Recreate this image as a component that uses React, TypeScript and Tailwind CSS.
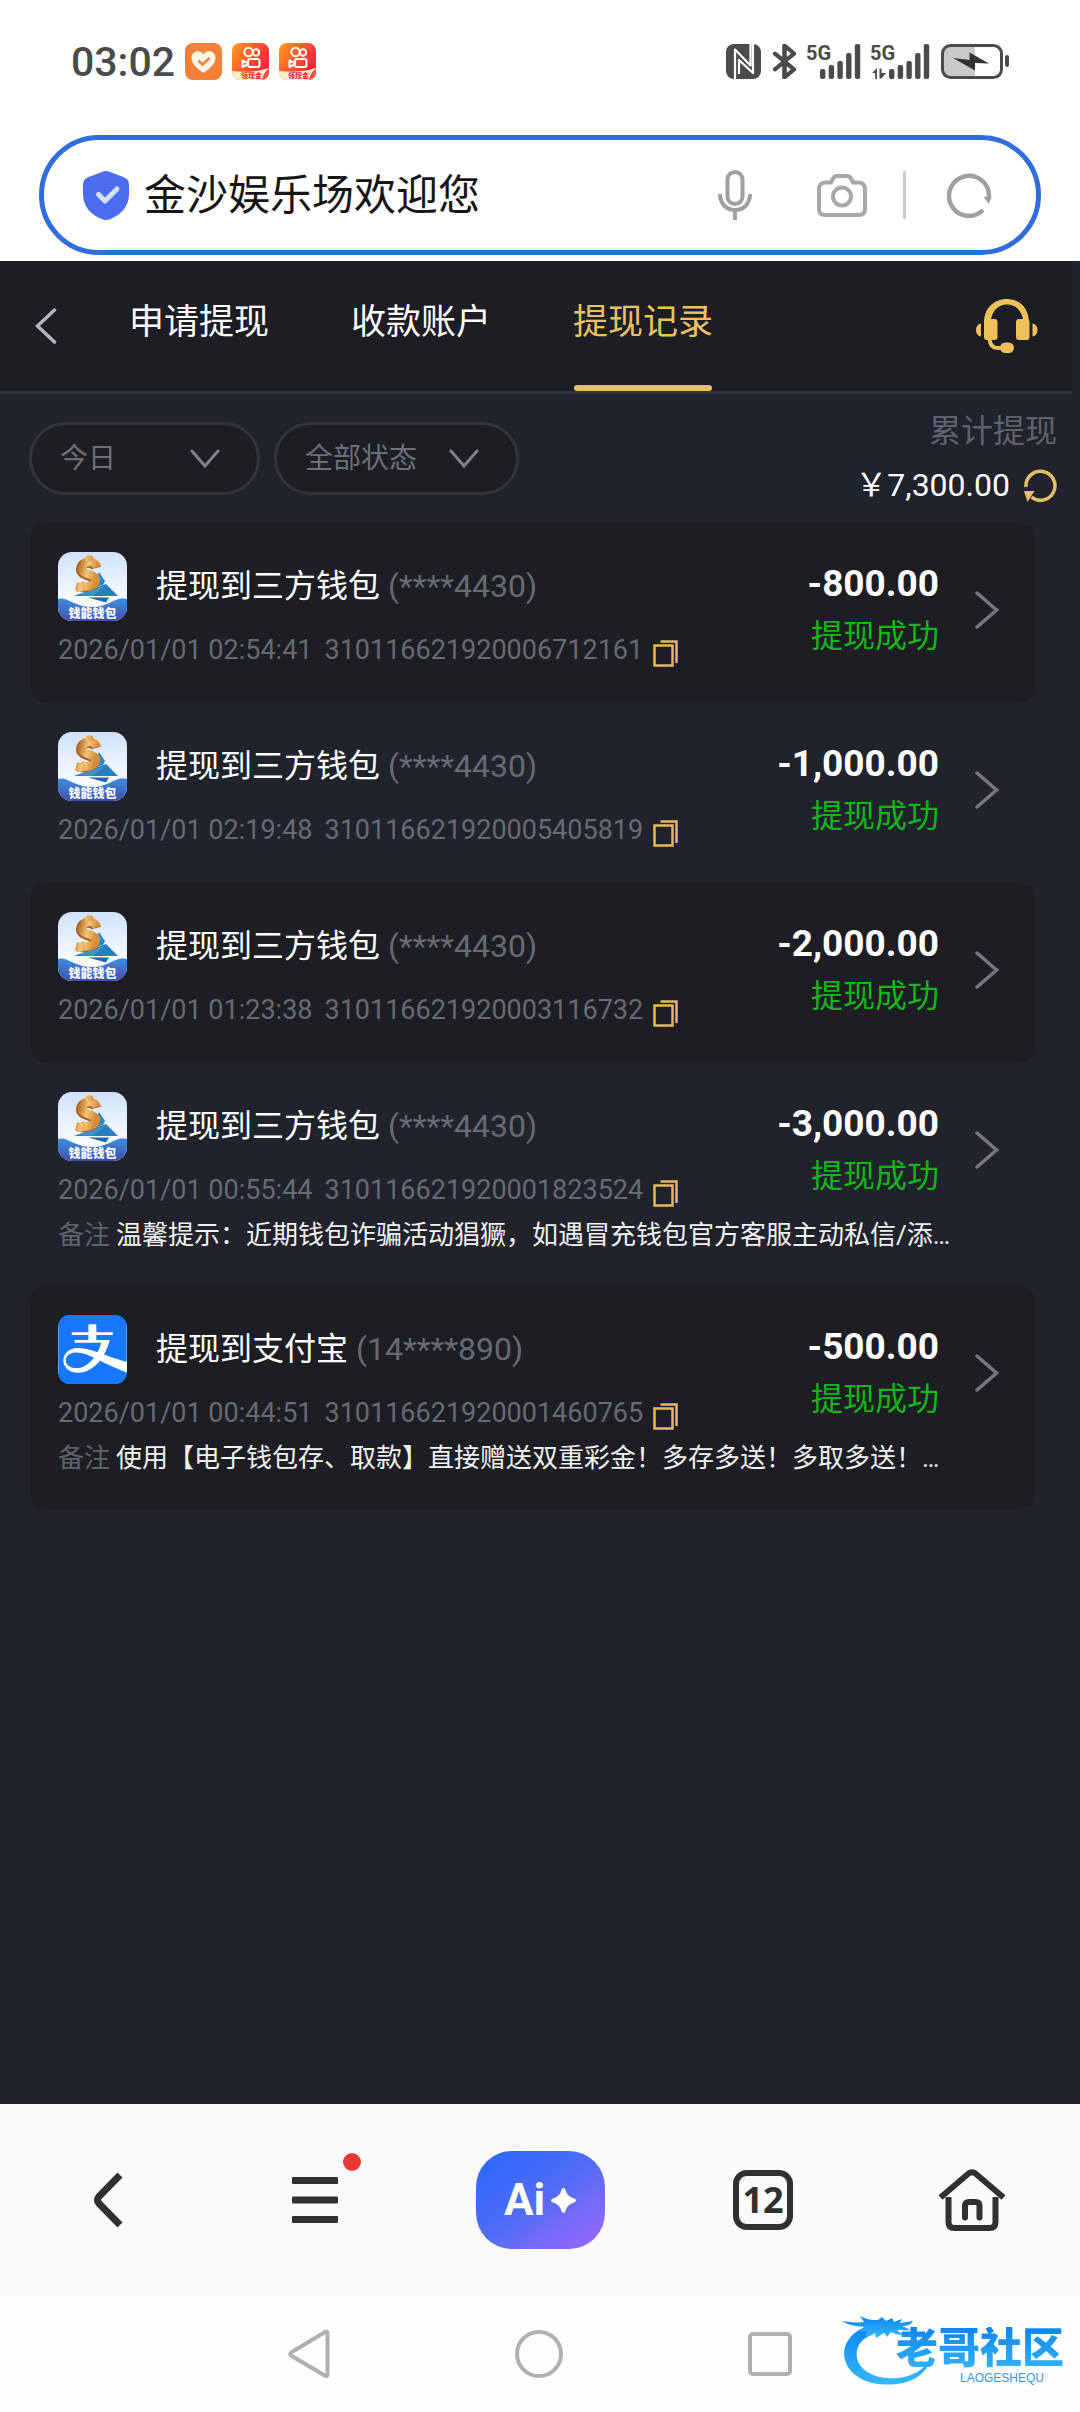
import { useState } from "react";
import { Bluetooth } from "lucide-react";
import { SiAlipay } from "react-icons/si";

type WithdrawalRecord = {
  method: "wallet" | "alipay";
  title: string;
  account: string;
  time: string;
  order: string;
  amount: string;
  remark?: string;
};

const records: WithdrawalRecord[] = [
  {
    method: "wallet",
    title: "提现到三方钱包",
    account: "(****4430)",
    time: "2026/01/01 02:54:41",
    order: "310116621920006712161",
    amount: "-800.00",
  },
  {
    method: "wallet",
    title: "提现到三方钱包",
    account: "(****4430)",
    time: "2026/01/01 02:19:48",
    order: "310116621920005405819",
    amount: "-1,000.00",
  },
  {
    method: "wallet",
    title: "提现到三方钱包",
    account: "(****4430)",
    time: "2026/01/01 01:23:38",
    order: "310116621920003116732",
    amount: "-2,000.00",
  },
  {
    method: "wallet",
    title: "提现到三方钱包",
    account: "(****4430)",
    time: "2026/01/01 00:55:44",
    order: "310116621920001823524",
    amount: "-3,000.00",
    remark: "温馨提示：近期钱包诈骗活动猖獗，如遇冒充钱包官方客服主动私信/添…",
  },
  {
    method: "alipay",
    title: "提现到支付宝",
    account: "(14****890)",
    time: "2026/01/01 00:44:51",
    order: "310116621920001460765",
    amount: "-500.00",
    remark: "使用【电子钱包存、取款】直接赠送双重彩金！多存多送！多取多送！…",
  },
];

const tabs = ["申请提现", "收款账户", "提现记录"];

function HeartAppIcon() {
  return (
    <svg width="37" height="37" viewBox="0 0 37 37" aria-hidden="true">
      <rect width="37" height="37" rx="8" fill="#f5803a" />
      <path
        d="M18.5 30C12 25.500 6.500 20.500 6.500 14.800c0-4 3-6.600 6.300-6.600 2.300 0 4.500 1.200 5.700 3.200 1.200-2 3.400-3.200 5.700-3.200 3.300 0 6.300 2.600 6.300 6.600C30.500 20.500 25 25.500 18.500 30z"
        fill="#fff6e6"
      />
      <path d="M13.500 17.500l4 4 7-6.500" fill="none" stroke="#f5803a" strokeWidth="2.600" />
    </svg>
  );
}

function VideoAppIcon({ id }: { id: string }) {
  return (
    <svg width="37" height="37" viewBox="0 0 37 37" aria-hidden="true">
      <defs>
        <linearGradient id={id} x1="0" y1="0" x2="1" y2="0.600">
          <stop offset="0" stopColor="#ffa020" />
          <stop offset="0.500" stopColor="#fb5a2c" />
          <stop offset="1" stopColor="#f5203c" />
        </linearGradient>
        <clipPath id={id + "-clip"}>
          <rect width="37" height="37" rx="8" />
        </clipPath>
      </defs>
      <g clipPath={`url(#${id}-clip)`}>
        <rect width="37" height="37" fill={`url(#${id})`} />
        <g fill="none" stroke="#fff" strokeWidth="2" strokeLinejoin="round">
          <circle cx="16.500" cy="9" r="4.200" />
          <circle cx="24" cy="9.500" r="3.200" />
          <rect x="16" y="16" width="11.500" height="8" rx="2" />
          <path d="M15.500 20l-5-2.500V24l5-2.500" />
        </g>
        <path d="M0 28c12 1.500 24 1 37-3l-4 12H0z" fill="#fdecc8" />
        <path d="M37 26c-4 2-6 6-7 11h7z" fill="#e8553a" />
        <text
          x="9"
          y="35"
          fontSize="7"
          fontWeight="700"
          fill="#d8242c"
          fontFamily="'Noto Sans CJK SC', sans-serif"
        >
          领现金
        </text>
      </g>
    </svg>
  );
}

function NfcIcon() {
  return (
    <svg width="35" height="35" viewBox="0 0 35 35" aria-hidden="true">
      <rect width="35" height="35" rx="8" fill="#4b4b4b" />
      <path
        d="M9 35V5.500l15.500 16V0H27v29L13 16v14"
        fill="none"
        stroke="#fff"
        strokeWidth="2.200"
        strokeLinejoin="round"
      />
    </svg>
  );
}

function Signal({ data = false }: { data?: boolean }) {
  const x = data ? 17 : 12;
  const bars = [10, 14, 18, 26, 35];
  return (
    <svg
      width={data ? 57 : 52}
      height="35"
      viewBox={data ? "0 0 57 35" : "0 0 52 35"}
      fill="#4b4b4b"
      className="overflow-visible"
      aria-hidden="true"
    >
      <text x="-2" y="16" fontSize="20" fontWeight="700" fontFamily="Roboto, sans-serif">
        5G
      </text>
      {bars.map((h, i) => (
        <rect key={h} x={x + i * 8.7} y={35 - h} width="5.400" height={h} rx="2" />
      ))}
      {data && <path d="M0 29l5-5v11H3.200v-6zM7.500 24.500h2V29H14l-4.500 5.500h-2z" />}
    </svg>
  );
}

function BatteryIcon() {
  return (
    <svg width="68" height="35" viewBox="0 0 68 35" aria-hidden="true">
      <path d="M9 2h25v31H9a7 7 0 0 1-7-7V9a7 7 0 0 1 7-7z" fill="#c9c9c9" />
      <rect x="1.500" y="1.500" width="59" height="32" rx="8" fill="none" stroke="#4b4b4b" strokeWidth="3" />
      <rect x="64" y="11" width="4" height="12" rx="2" fill="#4b4b4b" />
      <path d="M12 14l16.500 2V8.500L48 19.500l-14-.5v7.500z" fill="#333" />
    </svg>
  );
}

function StatusBar() {
  return (
    <div className="flex h-[123px] items-center justify-between pl-[71px] pr-[71px]">
      <div className="flex items-center gap-[10px]">
        <span className="text-[41px] font-medium leading-[48px] text-[#4b4b4b]">03:02</span>
        <HeartAppIcon />
        <VideoAppIcon id="video-a" />
        <VideoAppIcon id="video-b" />
      </div>
      <div className="flex items-center gap-3">
        <NfcIcon />
        <svg width="23" height="35" viewBox="6 1 12 22" preserveAspectRatio="none" aria-hidden="true">
          <Bluetooth color="#4b4b4b" strokeWidth={2.4} />
        </svg>
        <Signal />
        <Signal data />
        <BatteryIcon />
      </div>
    </div>
  );
}

function AddressBar() {
  return (
    <div className="mx-[39px] mt-3 mb-[6px] flex h-[120px] items-center rounded-full border-[5px] border-[#306edc] bg-white pl-[39px] pr-11">
      <svg width="46" height="50" viewBox="0 0 46 50" className="shrink-0" aria-hidden="true">
        <path
          d="M19.500 1.700q3.500-1.400 7 0L41 7.200q5 2 5 7V24c0 12-7 20-18.500 25q-4.500 2-9 0C7 44 0 36 0 24v-9.800q0-5 5-7z"
          fill="#4c6cf0"
        />
        <path
          d="M15.500 24.500l6.500 6.500 12-12"
          fill="none"
          stroke="#d6e0ff"
          strokeWidth="5"
          strokeLinecap="round"
          strokeLinejoin="round"
        />
      </svg>
      <input
        aria-label="网址"
        defaultValue="金沙娱乐场欢迎您"
        className="ml-[15px] h-[72px] min-w-0 flex-1 bg-transparent pb-2 text-[42px] text-[#161616] outline-none"
      />
      <div className="flex items-center">
        <button aria-label="语音搜索">
          <svg width="34" height="50" viewBox="0 0 34 50" fill="none" stroke="#a0a0a0" strokeWidth="4">
            <rect x="9.500" y="2" width="15" height="32" rx="7.500" />
            <path d="M2 24c0 10 6.500 16 15 16s15-6 15-16M17 40v10" />
          </svg>
        </button>
        <button aria-label="拍照搜索" className="ml-[65px]">
          <svg width="50" height="43" viewBox="0 0 50 43" fill="none" stroke="#a8a8a8" strokeWidth="4">
            <path
              d="M9 8.500h5l2-4Q17.500 2 20 2h10q2.500 0 4 2.500l2 4h5q7 0 7 7V35q0 6-6 6H8q-6 0-6-6V15.500q0-7 7-7z"
              strokeLinejoin="round"
            />
            <circle cx="25" cy="22.500" r="9" />
          </svg>
        </button>
        <span className="ml-9 h-12 w-[3px] bg-[#cccccc]" />
        <button aria-label="刷新页面" className="ml-[41px]">
          <svg width="45" height="45" viewBox="0 0 45 45" fill="none" stroke="#a0a0a0" strokeWidth="4.500">
            <path d="M34.500 38.500A20 20 0 1 1 42 22.500v2" strokeLinecap="round" />
            <path d="M36.500 24l8-1-2.500 8z" fill="#a0a0a0" stroke="none" />
          </svg>
        </button>
      </div>
    </div>
  );
}

function HeadsetIcon() {
  return (
    <svg width="62" height="54" viewBox="0 0 62 54" fill="#eec05a" aria-hidden="true">
      <path d="M8 24C8 9 18 0 31 0s22 9 22 24h-5.500C46.500 12 40 5.500 31 5.500S15.500 12 14.500 24z" />
      <rect x="8" y="20" width="13.500" height="21" rx="3" />
      <rect x="40" y="20" width="13.500" height="21" rx="3" />
      <path d="M5 24.500v13C2 37 0 34.500 0 31s2-6 5-6.500zM56.500 24.500v13c3-.5 5-3 5-6.500s-2-6-5-6.500z" />
      <path d="M13.500 40q1 9 7.500 9h6" fill="none" stroke="#eec05a" strokeWidth="4" />
      <rect x="24" y="43.500" width="14" height="10.500" rx="5.200" />
    </svg>
  );
}

function PageHeader({ active, onSelect }: { active: string; onSelect: (tab: string) => void }) {
  return (
    <header className="mr-2 flex h-[133px] border-b-[3px] border-[#2f3740] bg-[#1d1e23]">
      <button aria-label="返回" className="flex w-[129px] items-center pl-[35px]">
        <svg width="22" height="36" viewBox="0 0 22 36" fill="none" stroke="#b4b4be" strokeWidth="3.500" strokeLinecap="round">
          <path d="M19.500 2L2.500 18l17 16" />
        </svg>
      </button>
      <nav className="flex gap-[82px]">
        {tabs.map((tab) => (
          <button
            key={tab}
            onClick={() => onSelect(tab)}
            className={
              tab === active
                ? "flex w-[140px] flex-col items-center text-[#ecc163]"
                : "flex w-[140px] flex-col items-center text-white"
            }
          >
            <span className="whitespace-nowrap text-[35px] leading-[124px]">{tab}</span>
            {tab === active && <span className="h-[6px] w-[138px] shrink-0 rounded-full bg-[#e9c063]" />}
          </button>
        ))}
      </nav>
      <button aria-label="在线客服" className="ml-auto mr-[34px]">
        <HeadsetIcon />
      </button>
    </header>
  );
}

function FilterSelect({ label, options, wide }: { label: string; options: string[]; wide?: boolean }) {
  return (
    <div
      className={
        wide
          ? "flex h-[73px] w-[245px] items-center rounded-full border-[3px] border-[#2f343d] bg-[#1d1e23] pl-7 pr-[37px]"
          : "flex h-[73px] w-[231px] items-center rounded-full border-[3px] border-[#2f343d] bg-[#1d1e23] pl-7 pr-[37px]"
      }
    >
      <select
        aria-label={label}
        className="h-14 min-w-0 flex-1 appearance-none bg-transparent text-[28px] text-[#6d6e78] outline-none"
      >
        {options.map((o) => (
          <option key={o}>{o}</option>
        ))}
      </select>
      <svg width="30" height="20" viewBox="0 0 30 20" className="shrink-0" fill="none" stroke="#7f808a" strokeWidth="3" strokeLinecap="round">
        <path d="M2 2l13 15L28 2" />
      </svg>
    </div>
  );
}

function FilterBar() {
  return (
    <div className="flex items-start justify-between pb-[11px] pl-[29px] pr-[23px]">
      <div className="flex gap-[14px] pt-7">
        <FilterSelect label="日期" options={["今日", "昨日", "近七日"]} />
        <FilterSelect label="状态" options={["全部状态", "提现成功", "提现失败"]} wide />
      </div>
      <div className="flex flex-col items-end pt-[10px] text-[32px] leading-[54px]">
        <span className="text-[#5f626d]">累计提现</span>
        <div className="flex items-center gap-[14px]">
          <span className="text-white">￥7,300.00</span>
          <button aria-label="刷新金额">
            <svg width="33" height="33" viewBox="0 0 33 33" fill="none" stroke="#e5bf66" strokeWidth="3.500">
              <path d="M2 18A14.500 14.500 0 1 1 7.500 28.200" />
              <path d="M0 22h10.500L3.500 33z" fill="#e5bf66" stroke="none" />
            </svg>
          </button>
        </div>
      </div>
    </div>
  );
}

function WalletLogo({ id }: { id: string }) {
  return (
    <svg width="69" height="69" viewBox="0 0 69 69" className="shrink-0" role="img" aria-label="钱能钱包">
      <defs>
        <linearGradient id={id + "-sky"} x1="0" y1="0" x2="0" y2="1">
          <stop offset="0" stopColor="#cfe2fb" />
          <stop offset="0.700" stopColor="#f8fbff" />
        </linearGradient>
        <linearGradient id={id + "-sea"} x1="0" y1="0" x2="0" y2="1">
          <stop offset="0" stopColor="#3f8fe0" />
          <stop offset="1" stopColor="#3d50b0" />
        </linearGradient>
        <linearGradient id={id + "-gold"} x1="0" y1="0" x2="1" y2="0.300">
          <stop offset="0" stopColor="#b9722c" />
          <stop offset="0.500" stopColor="#f3c577" />
          <stop offset="1" stopColor="#d58f3c" />
        </linearGradient>
        <clipPath id={id + "-clip"}>
          <rect width="69" height="69" rx="14" />
        </clipPath>
      </defs>
      <g clipPath={`url(#${id}-clip)`}>
        <rect width="69" height="69" fill={`url(#${id}-sky)`} />
        <path d="M41 20l6 9-2 4-10 3z" fill="#2f86c4" />
        <path d="M16 44l32-12 12 12z" fill="#2a7dbd" />
        <path
          d="M38 16C36 9 24 9 23 17c-1 7 15 6 14 12-1 7-12 8-16 4"
          fill="none"
          stroke="#a8622a"
          strokeWidth="10"
        />
        <path
          d="M39 15C37 8 25 8 24 16c-1 7 15 6 14 12-1 7-12 8-16 4"
          fill="none"
          stroke={`url(#${id}-gold)`}
          strokeWidth="8.500"
        />
        <path d="M27 9l1-5 3-1 4 1 1 5zM17 38l2-8 8 2v7l-8 1z" fill={`url(#${id}-gold)`} />
        <path d="M19 43l28-9-12 10z" fill="#3b93cf" />
        <path d="M30 45.500h21l-3 5z" fill="#1f6bab" />
        <path d="M0 47c9-3 16 8 34 8S58 43 69 47v22H0z" fill={`url(#${id}-sea)`} />
        <text
          x="34.500"
          y="66"
          textAnchor="middle"
          fontSize="12"
          fontWeight="900"
          fill="#fff"
          fontFamily="'Noto Sans CJK SC', sans-serif"
        >
          钱能钱包
        </text>
      </g>
    </svg>
  );
}

function AlipayLogo() {
  return (
    <span className="flex size-[69px] shrink-0 items-center justify-center">
      <span className="rounded-[14px] bg-white">
        <SiAlipay size={69} color="#1677ff" title="支付宝" />
      </span>
    </span>
  );
}

function RecordCard({ record, index }: { record: WithdrawalRecord; index: number }) {
  return (
    <li
      className={
        index % 2 === 0
          ? "rounded-2xl bg-[#1d1e23] pt-[29px] pr-9 pb-[35px] pl-7"
          : "rounded-2xl pt-[29px] pr-9 pb-[35px] pl-7"
      }
    >
      <div className="flex h-[116px] items-center justify-between">
        <div>
          <div className="flex items-center">
            {record.method === "wallet" ? <WalletLogo id={`wallet-${index}`} /> : <AlipayLogo />}
            <span className="ml-[29px] text-[32px] leading-[48px] text-white">{record.title}</span>
            <span className="ml-2 text-[32px] leading-[48px] text-[#676973]">{record.account}</span>
          </div>
          <div className="mt-3 flex h-9 items-center text-[27px] text-[#676973]">
            <span>{record.time}</span>
            <span className="ml-3">{record.order}</span>
            <button aria-label="复制订单号" className="ml-[10px]">
              <svg width="25" height="32" viewBox="0 0 25 32" fill="none" stroke="#e3bb5c" strokeWidth="2.500">
                <rect x="1.500" y="10.500" width="18" height="20" />
                <path d="M7.500 6.500H23.500V28" />
              </svg>
            </button>
          </div>
        </div>
        <div className="flex items-center gap-9">
          <div className="flex flex-col items-end leading-[52px]">
            <span className="text-[37px] font-bold text-white">{record.amount}</span>
            <span className="text-[32px] text-[#12b516]">提现成功</span>
          </div>
          <button aria-label="查看详情">
            <svg width="24" height="38" viewBox="0 0 24 38" fill="none" stroke="#74757f" strokeWidth="3.500" strokeLinecap="round">
              <path d="M2 2l19.500 17L2 36" />
            </svg>
          </button>
        </div>
      </div>
      {record.remark && (
        <p className="mt-[11px] flex h-8 items-center gap-[6px] whitespace-nowrap text-[26px]">
          <span className="text-[#5f626d]">备注</span>
          <span className="text-[#f2f2f2]">{record.remark}</span>
        </p>
      )}
    </li>
  );
}

function BrowserToolbar() {
  return (
    <nav className="grid h-48 grid-cols-5 items-center justify-items-center bg-[#fafafa]">
      <button aria-label="后退">
        <svg width="30" height="56" viewBox="0 0 30 56" fill="none" stroke="#303030" strokeWidth="7" strokeLinejoin="round">
          <path d="M27 3L6 24.500q-3 3.500 0 7L27 53" />
        </svg>
      </button>
      <button aria-label="菜单" className="relative pr-[18px]">
        <svg width="46" height="46" viewBox="0 0 46 46" fill="#303030">
          <rect y="0" width="46" height="7" rx="1" />
          <rect y="19.500" width="46" height="7" rx="1" />
          <rect y="39" width="46" height="7" rx="1" />
        </svg>
        <span className="absolute -top-6 -right-[5px] size-[18px] rounded-full bg-[#e83a35]" />
      </button>
      <button
        aria-label="Ai"
        className="flex h-[98px] w-[129px] items-center justify-center gap-[6px] rounded-[36px] bg-linear-to-br from-[#2368ff] via-[#506cf6] to-[#9c66fc] text-white"
      >
        <span className="text-[44px] font-bold leading-[50px]">Ai</span>
        <svg width="25" height="25" viewBox="0 0 25 25" fill="#fff">
          <path d="M12.500 0q1.500 0 2 2 1.500 6.500 8.500 8.500 2 .5 2 2t-2 2q-7 2-8.500 8.500-.5 2-2 2t-2-2Q9 16.500 2 14.500q-2-.5-2-2t2-2Q9 8.500 10.500 2q.5-2 2-2z" />
        </svg>
      </button>
      <button aria-label="标签页" className="pl-[14px]">
        <span className="flex size-[60px] items-center justify-center rounded-[14px] border-[6px] border-[#303030] font-['Open_Sans'] text-[36px] font-bold leading-none text-[#303030]">
          12
        </span>
      </button>
      <button aria-label="主页">
        <svg width="68" height="62" viewBox="0 0 68 62" fill="none" stroke="#303030" strokeWidth="6">
          <path d="M2.500 28.500L30.500 4.500q3.500-2.500 7 0l28 24" />
          <path d="M10.500 28v25q0 6 6 6h35q6 0 6-6V28" />
          <path d="M27 48.500V37q0-4 4-4h6.500q4 0 4 4v11.500" strokeLinecap="round" />
        </svg>
      </button>
    </nav>
  );
}

function CommunityMark() {
  return (
    <div className="absolute top-[18px] right-4 flex h-[74px] w-[222px] justify-end">
      <svg width="90" height="74" viewBox="0 0 90 74" className="absolute top-0 left-0" aria-hidden="true">
        <defs>
          <linearGradient id="dragon" x1="0" y1="0" x2="0" y2="1">
            <stop offset="0" stopColor="#0a86ec" />
            <stop offset="1" stopColor="#35b8fb" />
          </linearGradient>
        </defs>
        <path
          d="M26 12C8 18-1 32 3 46c5 18 27 27 52 24 18-2 30-12 33-24-6 9-16 16-31 18-22 2-39-6-42-20-2-12 5-20 17-24z"
          fill="url(#dragon)"
        />
        <path
          d="M0 7c8 1 14 2 22 1l-4-6c7 4 12 4 18 4l4-3 4 4 6-3 2 4 8-3-2 4 13-2c-2 4-6 5-11 5l9 4c-6 1-10 0-14 0l6 5c-6 0-9-2-12-3l-4 5-3-4-8 5-1-5-10 4 2-6-8 1 5-5C13 12 6 11 0 7z"
          fill="url(#dragon)"
        />
      </svg>
      <div className="relative flex flex-col items-end pt-[13px]">
        <span className="bg-linear-to-b from-[#0a86ec] to-[#35b4fa] bg-clip-text text-[42px] font-black leading-[44px] text-transparent">
          老哥社区
        </span>
        <span className="mr-5 font-['Liberation_Sans'] text-[12px] leading-[14px] text-[#3b95dd]">LAOGESHEQU</span>
      </div>
    </div>
  );
}

function SystemNav() {
  return (
    <footer className="relative flex h-[116px] items-center justify-center gap-[185px] bg-[#fefefe]">
      <button aria-label="系统返回">
        <svg width="42" height="50" viewBox="0 0 42 50" fill="none" stroke="#b0b0b0" strokeWidth="4" strokeLinejoin="round">
          <path d="M38 2.500q1.500 0 1.500 2v41q0 2-2 1.500L3 26.500q-1.500-1.500 0-3z" />
        </svg>
      </button>
      <button aria-label="系统主页">
        <span className="block size-12 rounded-full border-4 border-[#b0b0b0]" />
      </button>
      <button aria-label="最近任务">
        <span className="block size-11 rounded-[5px] border-4 border-[#b0b0b0]" />
      </button>
      <CommunityMark />
    </footer>
  );
}

export default function App() {
  const [active, setActive] = useState("提现记录");
  return (
    <div className="flex min-h-screen flex-col bg-white font-[Roboto,'Noto_Sans_CJK_SC',sans-serif]">
      <StatusBar />
      <AddressBar />
      <main className="flex-1 bg-[#20232b]">
        <PageHeader active={active} onSelect={setActive} />
        <FilterBar />
        <ul className="mr-[45px] ml-[30px]">
          {records.map((record, index) => (
            <RecordCard key={record.order} record={record} index={index} />
          ))}
        </ul>
      </main>
      <BrowserToolbar />
      <SystemNav />
    </div>
  );
}
